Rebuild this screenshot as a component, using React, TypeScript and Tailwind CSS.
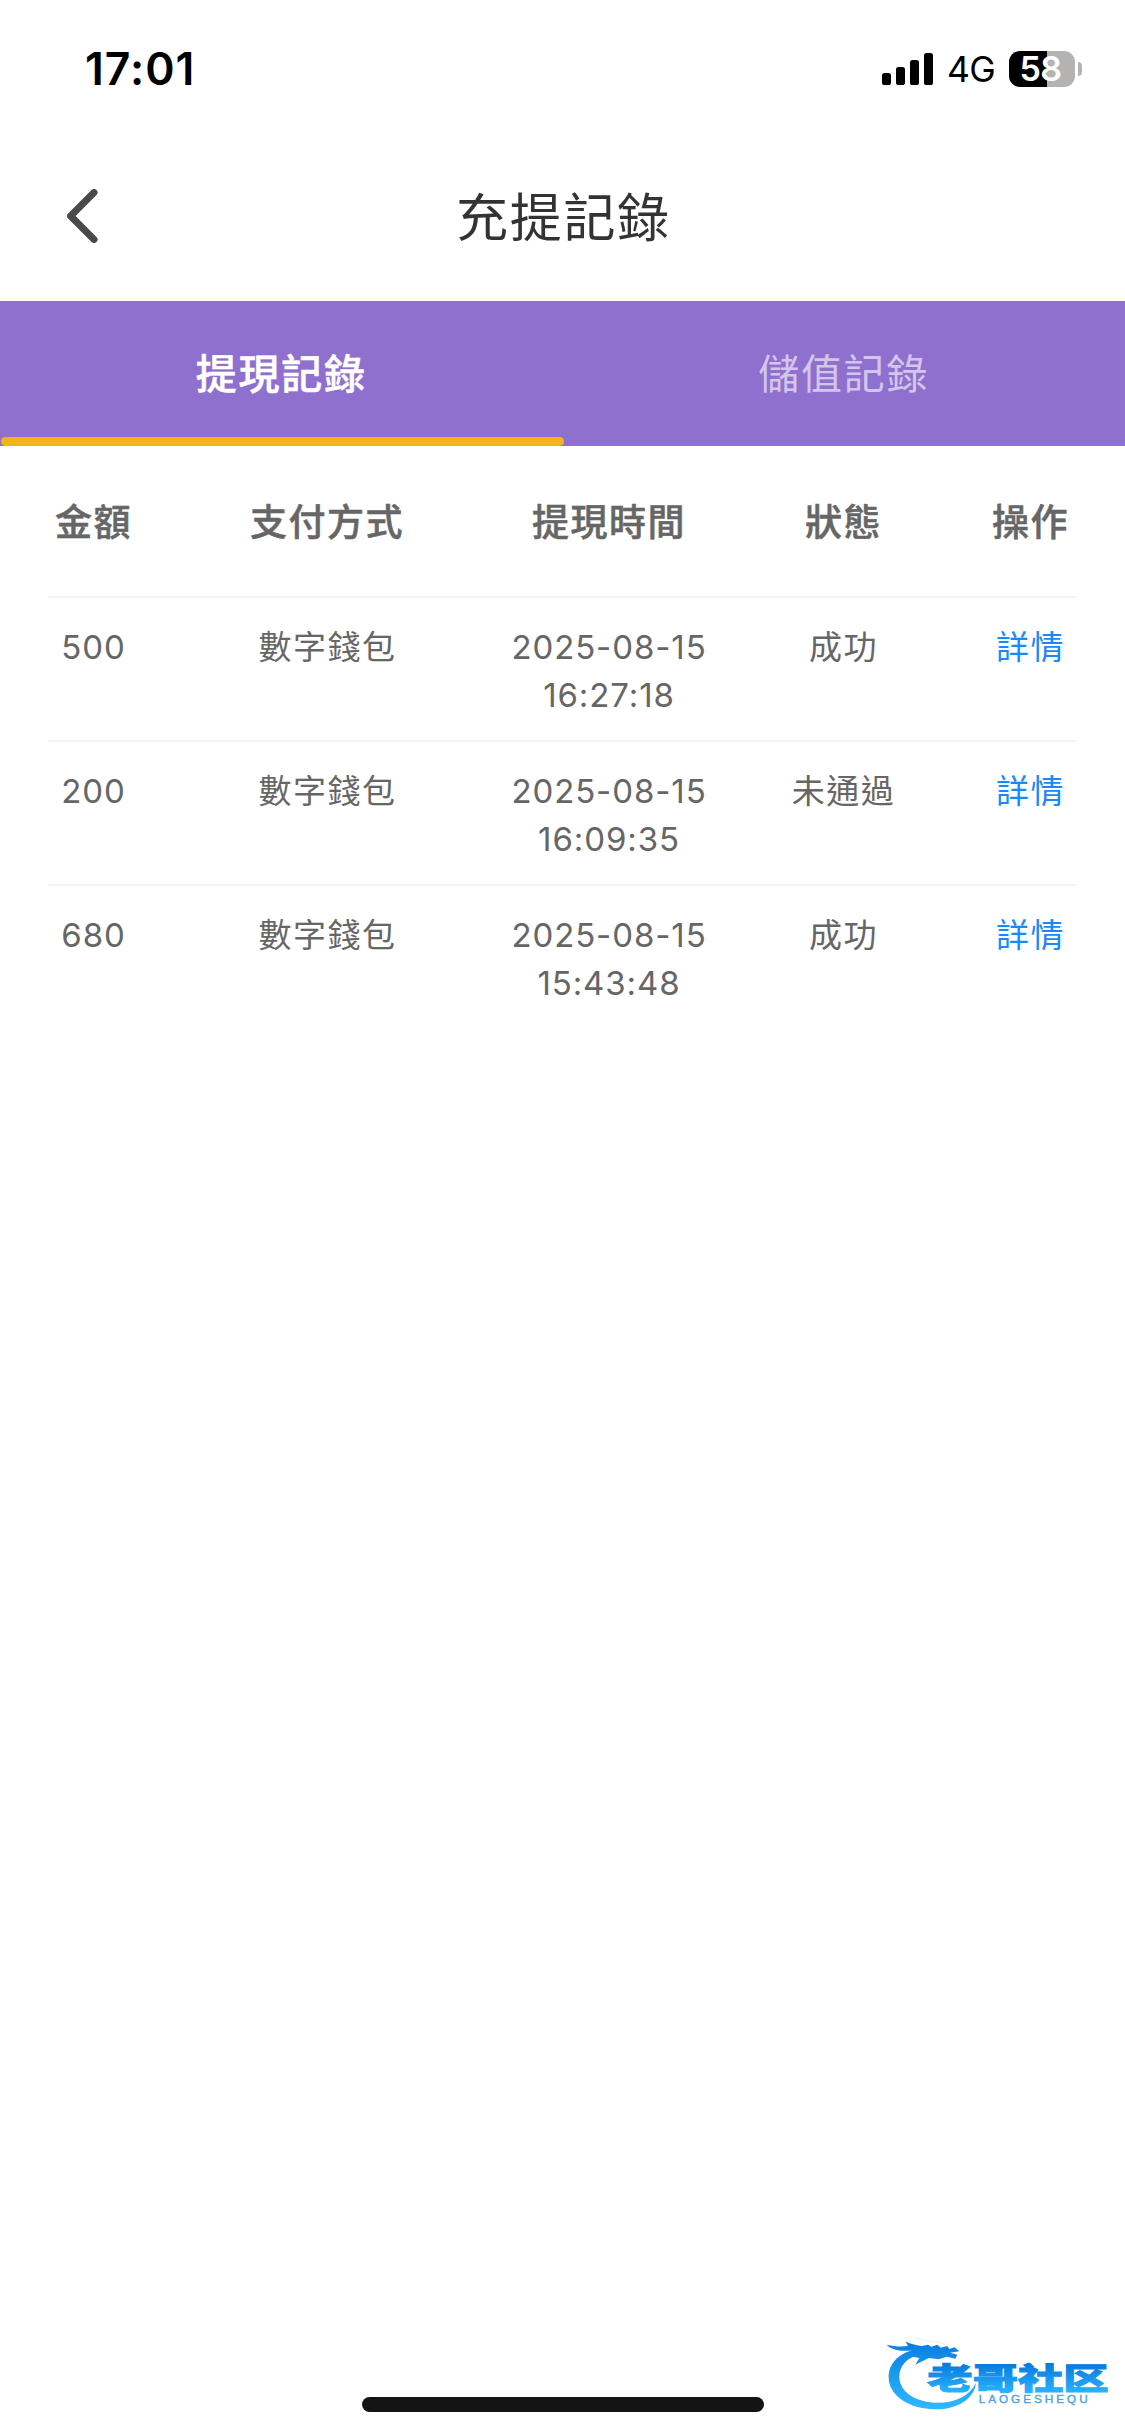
import React, { useState } from "react";

type RecordRow = {
  amount: string;
  method: string;
  date: string;
  time: string;
  status: string;
};

const tabs = [
  { key: "withdraw", name: "提現記錄" },
  { key: "deposit", name: "儲值記錄" },
];

const columns = ["金額", "支付方式", "提現時間", "狀態", "操作"];

const records: RecordRow[] = [
  { amount: "500", method: "數字錢包", date: "2025-08-15", time: "16:27:18", status: "成功" },
  { amount: "200", method: "數字錢包", date: "2025-08-15", time: "16:09:35", status: "未通過" },
  { amount: "680", method: "數字錢包", date: "2025-08-15", time: "15:43:48", status: "成功" },
];

const rowGrid =
  "grid grid-cols-[91px_376px_188px_281px_93px] text-center whitespace-nowrap";

function StatusBar() {
  return (
    <div className="flex h-[138px] items-start justify-between pl-[85px] pr-[43px] pt-[51px] text-black">
      <span className="text-[44.5px] font-semibold leading-[36px] tracking-[1px]">17:01</span>
      <div className="flex h-9 items-center">
        <svg width="51" height="32" viewBox="0 0 51 32">
          <rect x="0" y="20" width="9" height="12" rx="2.6" />
          <rect x="14" y="14" width="9" height="18" rx="2.6" />
          <rect x="28" y="7" width="9" height="25" rx="2.6" />
          <rect x="42" y="0" width="9" height="32" rx="2.6" />
        </svg>
        <span className="ml-[14px] mt-[2px] w-[47px] text-[35.5px] leading-9 tracking-[-0.8px]">
          4G
        </span>
        <div className="ml-[15px] h-9 w-[66px] rounded-[11px] bg-[linear-gradient(90deg,#000_38px,#b3b3b3_38px)] pr-[3px] text-center text-[34px] font-semibold leading-9 tracking-[-0.5px] text-white">
          58
        </div>
        <div className="ml-[3px] h-[14px] w-1 rounded-r-full bg-[#b3b3b3]" />
      </div>
    </div>
  );
}

function NavBar() {
  return (
    <header className="grid h-[163px] grid-cols-[1fr_auto_1fr] items-start">
      <button className="ml-[66px] mt-[51px] w-8" aria-label="返回">
        <svg width="32" height="54" viewBox="0 0 32 54" fill="none">
          <path
            d="M28 3.5L4.6 27L28 50.5"
            stroke="#4a4a4a"
            strokeWidth="7"
            strokeLinecap="round"
            strokeLinejoin="round"
          />
        </svg>
      </button>
      <h1 className="mt-[51px] pl-[2px] text-[52px] leading-[60px] tracking-[1.8px] text-[#333]">
        充提記錄
      </h1>
    </header>
  );
}

function RecordTable({ rows }: { rows: RecordRow[] }) {
  return (
    <div className="mx-12 tracking-[1.5px] text-[#666]">
      <div
        className={`${rowGrid} h-[150.5px] pt-[53px] text-[37px] font-medium leading-[48px] [-webkit-text-stroke:0.5px]`}
      >
        {columns.map((name) => (
          <span key={name}>{name}</span>
        ))}
      </div>
      {rows.map((row) => (
        <div
          key={row.time}
          className={`${rowGrid} h-36 border-t-2 border-[#f2f5f5] pt-[25px] text-[33px] leading-[48px]`}
        >
          <span className="tracking-[0.9px]">{row.amount}</span>
          <span className="pl-[1px]">{row.method}</span>
          <span className="flex flex-col items-center tracking-[0.9px]">
            <span>{row.date}</span>
            <span>{row.time}</span>
          </span>
          <span>{row.status}</span>
          <a href="#" className="text-[#1989fa]">
            詳情
          </a>
        </div>
      ))}
    </div>
  );
}

function Watermark() {
  return (
    <svg
      className="absolute bottom-0 right-0"
      width="255"
      height="116"
      viewBox="0 0 765 348"
      fill="url(#brand)"
    >
      <defs>
        <linearGradient id="brand" x1="0" y1="70" x2="0" y2="265" gradientUnits="userSpaceOnUse">
          <stop offset="0" stopColor="#0b7fe0" />
          <stop offset="1" stopColor="#2fb8ff" />
        </linearGradient>
        <linearGradient id="word" x1="0" y1="130" x2="0" y2="216" gradientUnits="userSpaceOnUse">
          <stop offset="0" stopColor="#0878dc" />
          <stop offset="1" stopColor="#28b2ff" />
        </linearGradient>
      </defs>
      {/* dragon body */}
      <path d="M150 88C92 92 56 128 56 172C56 226 116 268 196 268C262 268 312 238 318 188C300 226 258 248 204 248C138 248 88 216 88 170C88 138 110 112 150 104Z" />
      {/* head, horns and whiskers */}
      <path d="M50 74C74 80 94 80 114 78L106 64C124 74 142 76 156 78L174 74L184 80L202 74L212 83L232 78L238 87L254 82L268 94L240 98L262 104L256 116L230 110L206 118L176 114L136 134L148 114L118 108L126 92C100 94 66 92 50 74Z" />
      <path d="M134 52C164 66 196 62 232 74" fill="none" stroke="#e4f0fa" strokeWidth="3" />
      <text
        x="172"
        y="207"
        fontSize="90"
        textLength="544"
        lengthAdjust="spacingAndGlyphs"
        fill="url(#word)"
        stroke="url(#word)"
        strokeWidth="3"
        className="font-['Noto_Sans_CJK_SC',sans-serif] font-black"
      >
        老哥社区
      </text>
      <text
        x="326"
        y="248"
        fontSize="31"
        textLength="336"
        lengthAdjust="spacingAndGlyphs"
        fill="#48a3e6"
        stroke="#48a3e6"
        className="font-['Liberation_Sans',sans-serif] tracking-[8px]"
      >
        LAOGESHEQU
      </text>
    </svg>
  );
}

export default function App() {
  const [active, setActive] = useState("withdraw");

  return (
    <div className="relative flex h-[2436px] w-[1125px] flex-col overflow-hidden bg-white font-[Inter,'Noto_Sans_CJK_TC',sans-serif]">
      <StatusBar />
      <NavBar />

      <div className="flex h-[144.5px] bg-[#9070ce]">
        {tabs.map((tab) => {
          const isActive = tab.key === active;

          return (
            <button
              key={tab.key}
              onClick={() => setActive(tab.key)}
              className={`flex flex-1 flex-col items-center justify-between pt-[45px] text-[41px] leading-[56px] tracking-[1.7px] ${
                isActive
                  ? "font-medium text-white [-webkit-text-stroke:0.5px]"
                  : "text-[#d3c6eb]"
              }`}
            >
              {tab.name}
              {isActive && (
                <span className="ml-[2px] h-[9px] w-full rounded-full bg-[#eeb717]" />
              )}
            </button>
          );
        })}
      </div>

      <RecordTable rows={records} />

      <div className="mx-auto mb-[24px] mt-auto h-[15px] w-[402px] rounded-full bg-[#141414]" />
      <Watermark />
    </div>
  );
}
